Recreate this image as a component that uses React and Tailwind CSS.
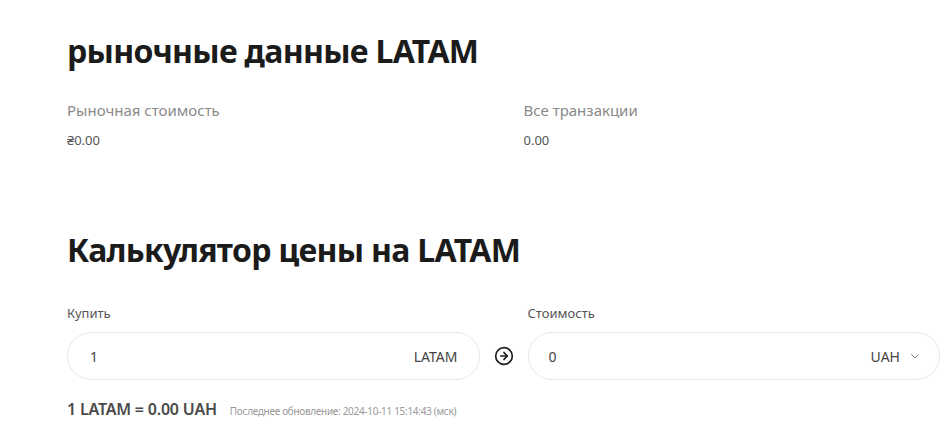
import React from "react";

function ArrowCircle() {
  return (
    <svg width="20" height="20" viewBox="0 0 24 24" fill="none" stroke="#1f1f1f" strokeWidth="2" strokeLinecap="round" strokeLinejoin="round">
      <circle cx="12" cy="12" r="10" />
      <path d="M8 12h8" />
      <path d="m12 16 4-4-4-4" />
    </svg>
  );
}

function Chevron() {
  return (
    <svg width="12" height="12" viewBox="0 0 24 24" fill="none" stroke="#666" strokeWidth="1.6" strokeLinecap="round" strokeLinejoin="round">
      <path d="m5 9 7 7 7-7" />
    </svg>
  );
}

export default function App() {
  return (
    <div className="bg-white w-[949px] h-[432px] overflow-hidden" style={{ fontFamily: '"Noto Sans", "Open Sans", sans-serif' }}>
      <div className="pl-[67px] w-[940px] pt-[31px]">
        <h1 className="text-[32px] leading-[40px] font-bold tracking-[-0.7px] text-[#1b1b1b]">рыночные данные LATAM</h1>
        <div className="grid grid-cols-2 gap-x-10 mt-[29px]">
          <div>
            <div className="text-[15px] leading-[20px] text-[#8a8a8a]">Рыночная стоимость</div>
            <div className="text-[13px] leading-[20px] text-[#555] mt-[10px]">₴0.00</div>
          </div>
          <div>
            <div className="text-[15px] leading-[20px] text-[#8a8a8a]">Все транзакции</div>
            <div className="text-[13px] leading-[20px] text-[#555] mt-[10px]">0.00</div>
          </div>
        </div>
        <h2 className="mt-[80px] text-[32px] leading-[40px] font-bold tracking-[-0.7px] text-[#1b1b1b]">Калькулятор цены на LATAM</h2>
        <div className="flex items-end mt-[33px]">
          <div className="flex-1 flex flex-col">
            <div className="text-[13px] leading-[20px] text-[#555]">Купить</div>
            <div className="mt-[9px] h-[48px] rounded-full border border-[#e6e6e6] flex items-center justify-between pl-[22px] pr-[21px] text-[14px] text-[#444]">
              <span>1</span>
              <span>LATAM</span>
            </div>
          </div>
          <div className="w-[48px] h-[48px] flex items-center justify-center shrink-0">
            <ArrowCircle />
          </div>
          <div className="flex-1 flex flex-col">
            <div className="text-[13px] leading-[20px] text-[#555]">Стоимость</div>
            <div className="mt-[9px] h-[48px] rounded-full border border-[#e6e6e6] flex items-center justify-between pl-[20px] pr-[18px] text-[14px] text-[#444]">
              <span>0</span>
              <span className="flex items-center gap-[9px]">UAH <Chevron /></span>
            </div>
          </div>
        </div>
        <div className="mt-[17px] flex items-baseline gap-[13px]">
          <span className="text-[16px] leading-[24px] font-semibold tracking-[-0.2px] text-[#4a4a4a]">1 LATAM = 0.00 UAH</span>
          <span className="text-[10px] leading-[16px] tracking-[-0.3px] text-[#999]">Последнее обновление: 2024-10-11 15:14:43 (мск)</span>
        </div>
      </div>
    </div>
  );
}
